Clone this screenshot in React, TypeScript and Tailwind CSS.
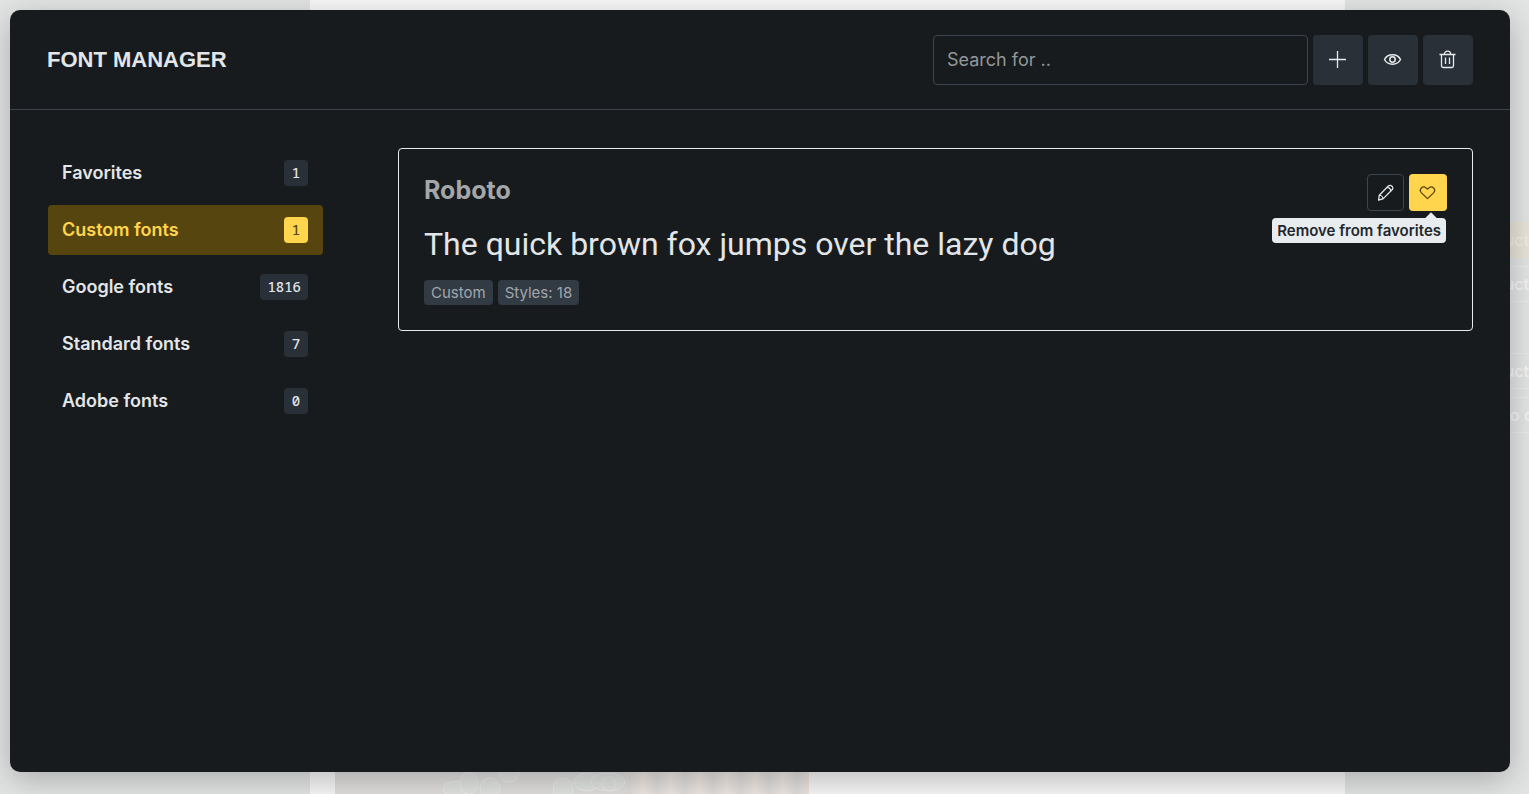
import { useState, type ReactNode } from "react";

const categories = [
  { name: "Favorites", count: 1 },
  { name: "Custom fonts", count: 1 },
  { name: "Google fonts", count: 1816 },
  { name: "Standard fonts", count: 7 },
  { name: "Adobe fonts", count: 0 },
];

function Icon({ children }: { children: ReactNode }) {
  return (
    <svg viewBox="0 0 20 20" className="size-5" fill="none" stroke="currentColor" strokeWidth="1.3" strokeLinejoin="round" aria-hidden="true">
      {children}
    </svg>
  );
}

const PlusIcon = () => (
  <Icon>
    <path d="M9.5 1v17M1 9.500h17" />
  </Icon>
);

const EyeIcon = () => (
  <Icon>
    <path strokeWidth="1.500" d="M1.500 9.500C3 6.600 6 4.800 9.500 4.800s6.500 1.800 8 4.700c-1.500 2.900-4.500 4.700-8 4.700s-6.500-1.800-8-4.700Z" />
    <circle strokeWidth="1.500" cx="9.500" cy="9.500" r="2.700" />
  </Icon>
);

const TrashIcon = () => (
  <Icon>
    <path d="M1.500 4.500h16M6.300 4.500c0-2 1.300-3.300 3.200-3.300s3.200 1.300 3.200 3.300M3.500 4.500v11.300c0 1.100.6 1.700 1.700 1.700h8.600c1.100 0 1.700-.6 1.700-1.700V4.500M7.500 7.500v6.500M11.500 7.500v6.500" />
  </Icon>
);

const PencilIcon = () => (
  <Icon>
    <path d="m3.300 12.200 9-9.200a2.400 2.400 0 0 1 3.400 0l.4.400a2.400 2.400 0 0 1 0 3.400L7 15.900l-4.400 1.100.7-4.800Zm0 0c1.900.1 3.600 1.800 3.700 3.700M11.100 4.300c1.900.2 3.500 1.800 3.700 3.700" />
  </Icon>
);

const HeartIcon = () => (
  <Icon>
    <path d="M9.500 15.600 3.500 9.900C2.100 8.500 2.100 6.400 3.400 5c1.300-1.300 3.400-1.300 4.700-.1l1.400 1.200 1.400-1.200c1.300-1.200 3.400-1.200 4.700.1 1.300 1.400 1.300 3.500-.1 4.900l-6 5.700Z" />
  </Icon>
);

function ToolButton({ label, children }: { label: string; children: ReactNode }) {
  return (
    <button type="button" aria-label={label} className="flex size-[50px] shrink-0 items-center justify-center rounded bg-[#293038] text-[#e8ebed]">
      {children}
    </button>
  );
}

function Editor() {
  return (
    <div aria-hidden="true" className="flex min-h-screen bg-[#f8f8f8]">
      <div className="w-[310px] shrink-0 bg-[#e3e5e4]" />
      <div className="flex flex-1 items-end pl-[25px]">
        <svg className="h-[30px] w-[474px]" viewBox="0 0 474 30" preserveAspectRatio="none">
          <defs>
            <linearGradient id="stripes" x1="0" x2="28" y1="0" y2="0" gradientUnits="userSpaceOnUse" spreadMethod="repeat">
              <stop offset="0" stopColor="#f0e8e2" />
              <stop offset=".5" stopColor="#e0dedd" />
              <stop offset="1" stopColor="#f0e8e2" />
            </linearGradient>
          </defs>
          <path fill="#e1dfde" d="M0 0h474v30H0z" />
          <path fill="url(#stripes)" d="M291 0h183v30H291z" />
          <g fill="#e2e4e2" stroke="#eceeeb">
            <ellipse cx="123" cy="25" rx="15" ry="8" />
            <ellipse cx="134" cy="19" rx="9" ry="11" />
            <ellipse cx="155" cy="24" rx="10" ry="10" />
            <ellipse cx="174" cy="10" rx="10" ry="8" />
            <ellipse cx="228" cy="25" rx="10" ry="11" />
            <ellipse cx="252" cy="18" rx="13" ry="9" />
            <ellipse cx="273" cy="18" rx="17" ry="9" />
            <ellipse cx="274" cy="20" rx="7" ry="7" />
          </g>
        </svg>
      </div>
      <div className="w-[184px] shrink-0 overflow-hidden bg-[#e3e5e4] pt-[222px] text-base font-medium leading-5 text-[#f6f6f6]">
        <div className="flex h-9 items-center justify-end bg-[#e8e3d8] text-[#f2eee4]">Product</div>
        <div className="mt-2 flex h-9 items-center justify-end border-y border-[#ebebeb]">Product</div>
        <div className="mt-[51px] flex h-9 items-center justify-end border-y border-[#ebebeb]">Product</div>
        <div className="-mr-9 mt-2 flex h-9 items-center justify-end border-y border-[#ebebeb]">Add to order</div>
      </div>
    </div>
  );
}

export default function App() {
  const [selected, setSelected] = useState("Custom fonts");

  return (
    <div className="relative min-h-screen overflow-hidden font-[Inter,sans-serif]">
      <Editor />
      <section
        role="dialog"
        aria-labelledby="manager-title"
        className="absolute top-2.5 right-[19px] bottom-[22px] left-2.5 flex flex-col rounded-[10px] bg-[#171b1d] text-[#e3e6e8] shadow-[0_8px_32px_rgba(0,0,0,0.25)]"
      >
        <header className="flex h-[100px] shrink-0 items-center justify-between border-b border-[#3b424b] px-[37px]">
          <h1 id="manager-title" className="font-['Liberation_Sans',sans-serif] text-[22px] font-bold leading-7">FONT MANAGER</h1>
          <div className="flex gap-[5px]">
            <input
              type="search"
              aria-label="Search fonts"
              placeholder="Search for .."
              className="h-[50px] w-[375px] rounded border border-[#3b4650] bg-transparent px-[13px] text-lg outline-none placeholder:text-[#92979a]"
            />
            <ToolButton label="Add font"><PlusIcon /></ToolButton>
            <ToolButton label="Preview"><EyeIcon /></ToolButton>
            <ToolButton label="Delete"><TrashIcon /></ToolButton>
          </div>
        </header>

        <div className="flex flex-1 gap-[75px] px-[37px] pt-[38px]">
          <nav aria-label="Font categories" className="flex w-[276px] shrink-0 flex-col gap-[7px] pl-px">
            {categories.map(({ name, count }) => {
              const active = name === selected;
              return (
                <button
                  key={name}
                  type="button"
                  aria-pressed={active}
                  onClick={() => setSelected(name)}
                  className={`flex h-[50px] items-center justify-between rounded pl-3.5 pr-[15px] text-lg font-semibold ${active ? "bg-[#57450f] text-[#ffd54d]" : ""}`}
                >
                  {name}
                  <span className={`flex h-[26px] min-w-6 items-center justify-center rounded px-[7px] pb-px font-['Noto_Sans_Mono','DejaVu_Sans_Mono',monospace] text-sm font-medium ${active ? "bg-[#ffd54d] text-[#57450f]" : "bg-[#293038]"}`}>
                    {count}
                  </span>
                </button>
              );
            })}
          </nav>

          <main className="min-w-0 flex-1">
            <article className="flex items-start justify-between rounded border border-[#e9eced] p-[25px]">
              <div>
                <h2 className="text-[25px] font-bold leading-8 text-[#a4a7a9]">Roboto</h2>
                <p className="mt-4 font-[Roboto,sans-serif] text-[32px] leading-[44px]">The quick brown fox jumps over the lazy dog</p>
                <div className="mt-3.5 flex gap-[5px] text-[15px] leading-[25px] text-[#a1a6aa]">
                  <span className="rounded bg-[#323a44] px-[7px]">Custom</span>
                  <span className="rounded bg-[#323a44] px-[7px]">Styles: 18</span>
                </div>
              </div>
              <div className="flex gap-[5px]">
                <button type="button" aria-label="Edit font" className="flex size-[37px] items-center justify-center rounded border border-[#3b4650]">
                  <PencilIcon />
                </button>
                <div className="relative">
                  <button type="button" aria-label="Favorite" aria-describedby="favorite-tip" className="flex h-[37px] w-[38px] items-center justify-center rounded bg-[#ffd54d] text-[#57450f]">
                    <HeartIcon />
                  </button>
                  <div id="favorite-tip" role="tooltip" className="absolute top-11 right-px rounded bg-[#e9ecef] px-[5px] text-[15px] font-semibold leading-[25px] whitespace-nowrap text-[#22272b]">
                    <span className="absolute -top-1 right-[11px] size-2 rotate-45 bg-[#e9ecef]" />
                    <span className="relative">Remove from favorites</span>
                  </div>
                </div>
              </div>
            </article>
          </main>
        </div>
      </section>
    </div>
  );
}
